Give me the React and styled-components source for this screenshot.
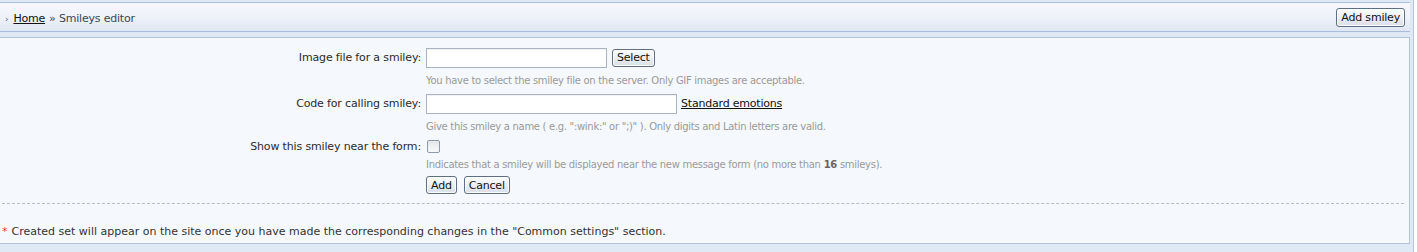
import React from 'react'
import styled, { createGlobalStyle } from 'styled-components'

const GlobalStyle = createGlobalStyle`
  html, body {
    margin: 0;
    padding: 0;
    background: #fff;
  }
  body {
    font-family: "DejaVu Sans", Verdana, sans-serif;
    font-size: 11px;
    color: #2b2b2b;
  }
`

const Frame = styled.div`
  width: 1414px;
  height: 252px;
  box-sizing: border-box;
  padding: 2px 3px 0 0;
  background: #dfe8f5;
  border-right: 1px solid #b7c6dd;
`

const Header = styled.div`
  height: 30px;
  box-sizing: border-box;
  display: flex;
  align-items: center;
  justify-content: space-between;
  padding: 1px 5px 0 5px;
  border-top: 1px solid #aebfdb;
  border-bottom: 1px solid #a9bbd8;
  background: linear-gradient(to bottom, #f6f8fc 0%, #eef2f9 50%, #dfe7f3 100%);
`

const Crumbs = styled.div`
  display: flex;
  align-items: center;
  gap: 4px;
  padding-top: 2px;
  color: #3c4658;
  font-size: 11px;
  letter-spacing: -0.2px;
`

const Arrow = styled.span`
  font-size: 9px;
  color: #5a6a84;
  margin-right: 1px;
`

const CrumbLink = styled.a`
  color: #111;
  text-decoration: underline;
`

const Button = styled.button`
  font-family: inherit;
  font-size: 11px;
  letter-spacing: -0.2px;
  color: #111;
  height: ${p => p.$h || 19}px;
  padding: 0 ${p => p.$px || 5}px;
  border: 1px solid #5f6e83;
  border-radius: 3px;
  background: linear-gradient(to bottom, #fbfcfd 0%, #eceff3 50%, #dadfe6 100%);
  box-shadow: inset 0 0 0 1px #fff;
  cursor: pointer;
`

const Panel = styled.div`
  margin-top: 5px;
  height: 207px;
  box-sizing: border-box;
  background: #f5f8fd;
  border-top: 1px solid #b3c3dc;
  border-right: 1px solid #b3c3dc;
  border-bottom: 1px solid #b3c3dc;
  display: flex;
  flex-direction: column;
`

const Form = styled.div`
  display: grid;
  grid-template-columns: 421px 1fr;
  column-gap: 5px;
  padding-top: 9px;
`

const Label = styled.div`
  font-size: 11px;
  letter-spacing: -0.15px;
  color: #2b2b2b;
  display: flex;
  align-items: center;
  justify-content: flex-end;
  height: ${p => p.$h}px;
`

const Field = styled.div`
  display: flex;
  align-items: center;
  gap: ${p => p.$gap || 5}px;
  height: ${p => p.$h}px;
`

const TextInput = styled.input`
  width: ${p => p.$w}px;
  height: 20px;
  box-sizing: border-box;
  border: 1px solid #a9b3c2;
  background: #fff;
  box-shadow: inset 0 1px 1px rgba(0,0,0,0.06);
  margin: 0;
`

const Hint = styled.div`
  grid-column: 2;
  color: #9a9a9a;
  font-size: 10px;
  letter-spacing: -0.3px;
  height: ${p => p.$h}px;
  display: flex;
  align-items: center;
  b { color: #666; margin: 0 3px; }
`

const Check = styled.span`
  display: inline-block;
  width: 11px;
  height: 11px;
  margin-left: 1px;
  border: 1px solid #8e99a9;
  border-radius: 2px;
  background: linear-gradient(to bottom, #e4e7eb, #f7f8fa);
`

const LinkText = styled.a`
  color: #111;
  font-size: 11px;
  letter-spacing: -0.2px;
  text-decoration: underline;
`

const Actions = styled.div`
  grid-column: 2;
  display: flex;
  gap: 7px;
  height: 20px;
  align-items: center;
`

const Divider = styled.div`
  margin: 8px 5px 0 2px;
  border-top: 1px dashed #b4bdc8;
`

const Note = styled.div`
  margin-top: 21px;
  padding-left: 2px;
  font-size: 11px;
  color: #333;
  span { color: #e03b3b; margin-right: 4px; }
`

export default function App() {
  return (
    <>
      <GlobalStyle />
      <Frame>
        <Header>
          <Crumbs>
            <Arrow>›</Arrow>
            <CrumbLink href="#">Home</CrumbLink>
            <span>» Smileys editor</span>
          </Crumbs>
          <Button $px={4}>Add smiley</Button>
        </Header>
        <Panel>
          <Form>
            <Label $h={21}>Image file for a smiley:</Label>
            <Field $h={21}>
              <TextInput $w={181} />
              <Button $h={18} $px={4}>Select</Button>
            </Field>
            <Hint $h={25}>You have to select the smiley file on the server. Only GIF images are acceptable.</Hint>

            <Label $h={21}>Code for calling smiley:</Label>
            <Field $h={21} $gap={4}>
              <TextInput $w={251} />
              <LinkText href="#">Standard emotions</LinkText>
            </Field>
            <Hint $h={25}>Give this smiley a name ( e.g. ":wink:" or ";)" ). Only digits and Latin letters are valid.</Hint>

            <Label $h={14}>Show this smiley near the form:</Label>
            <Field $h={14}>
              <Check />
            </Field>
            <Hint $h={22}>Indicates that a smiley will be displayed near the new message form (no more than<b>16</b>smileys).</Hint>

            <Actions>
              <Button $h={18} $px={4}>Add</Button>
              <Button $h={18} $px={4}>Cancel</Button>
            </Actions>
          </Form>
          <Divider />
          <Note><span>*</span>Created set will appear on the site once you have made the corresponding changes in the "Common settings" section.</Note>
        </Panel>
      </Frame>
    </>
  )
}
